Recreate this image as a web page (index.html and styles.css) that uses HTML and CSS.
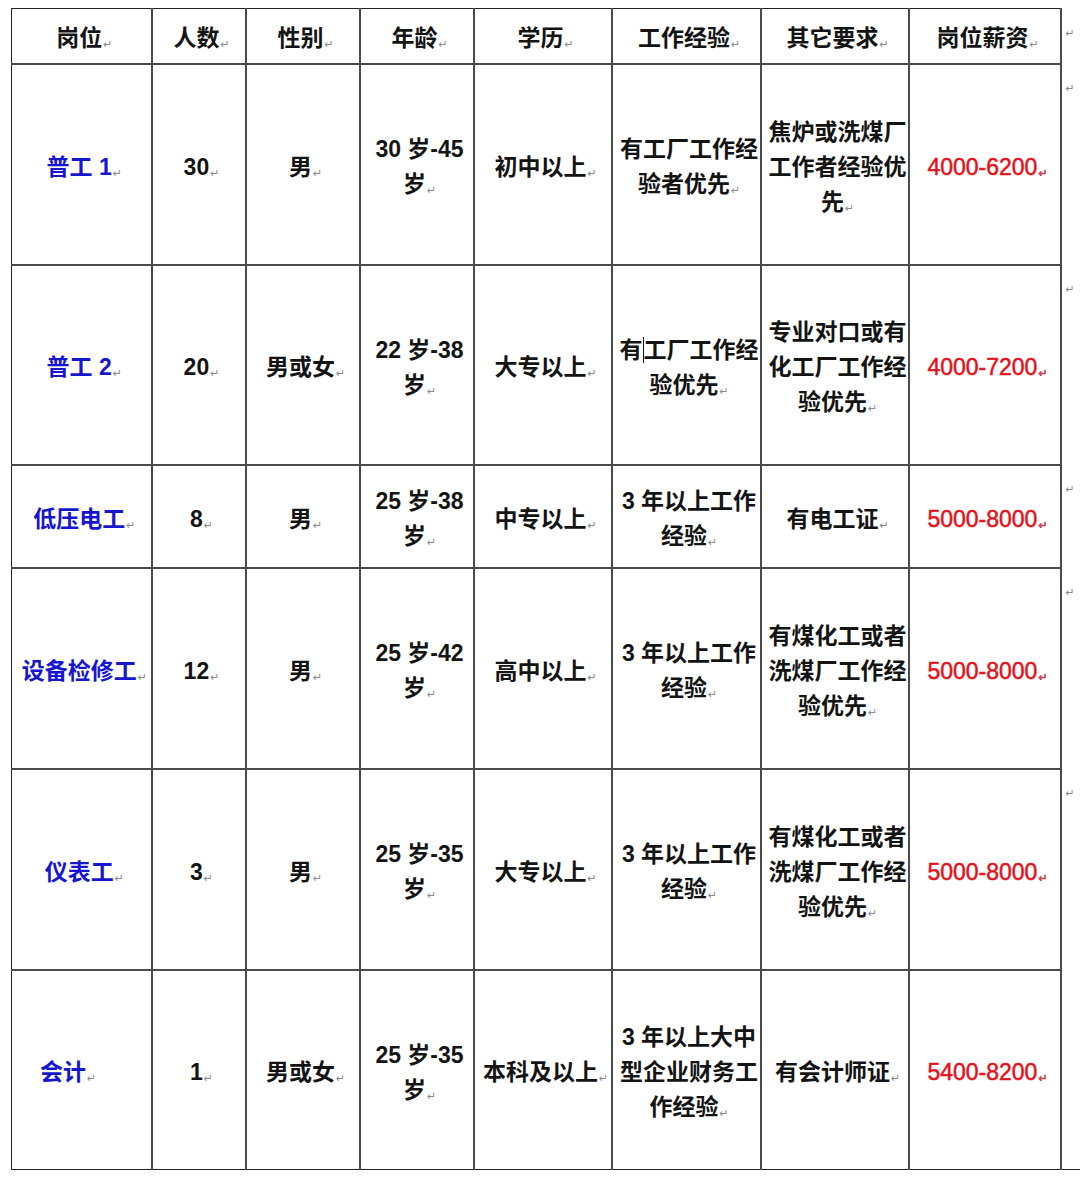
FILE: index.html
```html
<!DOCTYPE html>
<html lang="zh-CN">
<head>
<meta charset="utf-8">
<title>岗位招聘表</title>
<link rel="stylesheet" href="styles.css">
</head>
<body>
<table class="jobs">
  <colgroup>
    <col class="c1"><col class="c2"><col class="c3"><col class="c4"><col class="c5"><col class="c6"><col class="c7"><col class="c8"><col class="c9">
  </colgroup>
  <tr class="head">
    <th>岗位<span class="pm">↵</span></th>
    <th>人数<span class="pm">↵</span></th>
    <th>性别<span class="pm">↵</span></th>
    <th>年龄<span class="pm">↵</span></th>
    <th>学历<span class="pm">↵</span></th>
    <th>工作经验<span class="pm">↵</span></th>
    <th>其它要求<span class="pm">↵</span></th>
    <th>岗位薪资<span class="pm">↵</span></th>
    <td class="end"><span class="pm">↵</span></td>
  </tr>
  <tr class="tall">
    <td class="job">普工 1<span class="pm">↵</span></td>
    <td>30<span class="pm">↵</span></td>
    <td>男<span class="pm">↵</span></td>
    <td>30 岁-45<br>岁<span class="pm">↵</span></td>
    <td>初中以上<span class="pm">↵</span></td>
    <td>有工厂工作经<br>验者优先<span class="pm">↵</span></td>
    <td>焦炉或洗煤厂<br>工作者经验优<br>先<span class="pm">↵</span></td>
    <td class="pay">4000-6200<span class="pm">↵</span></td>
    <td class="end"><span class="pm">↵</span></td>
  </tr>
  <tr class="tall2">
    <td class="job">普工 2<span class="pm">↵</span></td>
    <td>20<span class="pm">↵</span></td>
    <td>男或女<span class="pm">↵</span></td>
    <td>22 岁-38<br>岁<span class="pm">↵</span></td>
    <td>大专以上<span class="pm">↵</span></td>
    <td>有<span class="caret"></span>工厂工作经<br>验优先<span class="pm">↵</span></td>
    <td>专业对口或有<br>化工厂工作经<br>验优先<span class="pm">↵</span></td>
    <td class="pay">4000-7200<span class="pm">↵</span></td>
    <td class="end"><span class="pm">↵</span></td>
  </tr>
  <tr class="short">
    <td class="job">低压电工<span class="pm">↵</span></td>
    <td>8<span class="pm">↵</span></td>
    <td>男<span class="pm">↵</span></td>
    <td>25 岁-38<br>岁<span class="pm">↵</span></td>
    <td>中专以上<span class="pm">↵</span></td>
    <td>3 年以上工作<br>经验<span class="pm">↵</span></td>
    <td>有电工证<span class="pm">↵</span></td>
    <td class="pay">5000-8000<span class="pm">↵</span></td>
    <td class="end"><span class="pm">↵</span></td>
  </tr>
  <tr class="tall">
    <td class="job">设备检修工<span class="pm">↵</span></td>
    <td>12<span class="pm">↵</span></td>
    <td>男<span class="pm">↵</span></td>
    <td>25 岁-42<br>岁<span class="pm">↵</span></td>
    <td>高中以上<span class="pm">↵</span></td>
    <td>3 年以上工作<br>经验<span class="pm">↵</span></td>
    <td>有煤化工或者<br>洗煤厂工作经<br>验优先<span class="pm">↵</span></td>
    <td class="pay">5000-8000<span class="pm">↵</span></td>
    <td class="end"><span class="pm">↵</span></td>
  </tr>
  <tr class="tall">
    <td class="job">仪表工<span class="pm">↵</span></td>
    <td>3<span class="pm">↵</span></td>
    <td>男<span class="pm">↵</span></td>
    <td>25 岁-35<br>岁<span class="pm">↵</span></td>
    <td>大专以上<span class="pm">↵</span></td>
    <td>3 年以上工作<br>经验<span class="pm">↵</span></td>
    <td>有煤化工或者<br>洗煤厂工作经<br>验优先<span class="pm">↵</span></td>
    <td class="pay">5000-8000<span class="pm">↵</span></td>
    <td class="end"><span class="pm">↵</span></td>
  </tr>
  <tr class="tall2">
    <td class="job job-left">会计<span class="pm">↵</span></td>
    <td>1<span class="pm">↵</span></td>
    <td>男或女<span class="pm">↵</span></td>
    <td>25 岁-35<br>岁<span class="pm">↵</span></td>
    <td>本科及以上<span class="pm">↵</span></td>
    <td>3 年以上大中<br>型企业财务工<br>作经验<span class="pm">↵</span></td>
    <td>有会计师证<span class="pm">↵</span></td>
    <td class="pay">5400-8200<span class="pm">↵</span></td>
    <td class="end"></td>
  </tr>
</table>
</body>
</html>
```

FILE: styles.css
```css
html, body {
  margin: 0;
  padding: 0;
  background: #ffffff;
}

body {
  padding: 8px 0 0 11px;
  font-family: "Liberation Sans", "Noto Sans CJK SC", sans-serif;
  color: #141414;
}

.jobs {
  border-collapse: collapse;
  table-layout: fixed;
  width: 1069px;
  font-size: 23px;
  font-weight: 700;
  line-height: 35px;
}

.c1 { width: 140px; }
.c2 { width: 94px; }
.c3 { width: 114px; }
.c4 { width: 114px; }
.c5 { width: 138px; }
.c6 { width: 149px; }
.c7 { width: 148px; }
.c8 { width: 152px; }
.c9 { width: 20px; }

.jobs th,
.jobs td {
  border: 2px solid #4a4a4a;
  padding: 12px 0 0 6px;
  text-align: center;
  vertical-align: middle;
  white-space: nowrap;
  font-weight: 700;
}

.jobs th:first-child,
.jobs td:first-child {
  border-left: 1px solid #222;
}

.head th,
.head td {
  border-top: 1px solid #222;
}

.jobs tr:last-child td {
  border-bottom: 1px solid #222;
}

.jobs td.end {
  border: none;
  text-align: left;
  vertical-align: top;
  padding: 8px 0 0 3px;
  line-height: 20px;
}

.head { height: 55px; }
.tall { height: 201px; }
.tall2 { height: 200px; }
.short { height: 103px; }

.job { color: #1616cf; }
.job-left { text-align: left !important; padding-left: 28px !important; }
.pay { color: #e3121b; font-weight: 400 !important; -webkit-text-stroke: 0.5px #e3121b; }

.pm {
  font-family: "DejaVu Sans", sans-serif;
  font-size: 11px;
  font-weight: 400;
  color: #8a8a8a;
  margin-left: 1px;
  vertical-align: -2px;
}

.caret {
  display: inline-block;
  width: 0;
  height: 26px;
  border-left: 1px solid #111;
  vertical-align: -5px;
}
```
